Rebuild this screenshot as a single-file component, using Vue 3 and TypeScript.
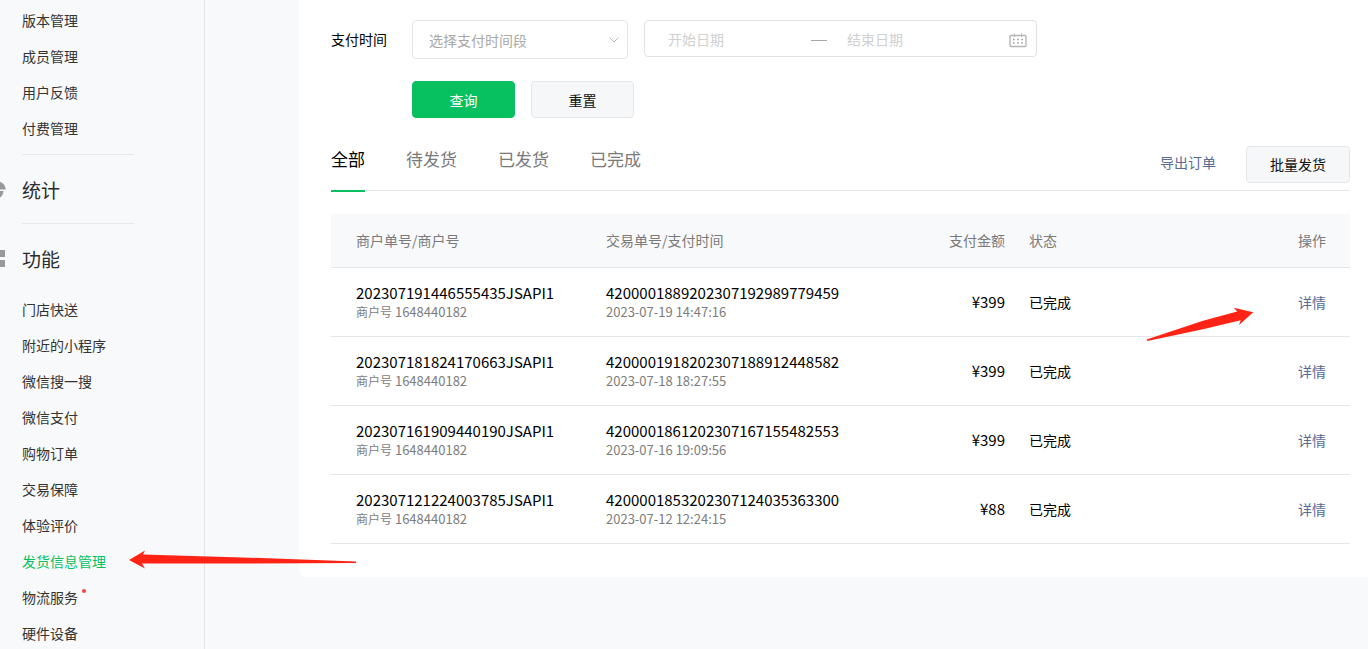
<script setup lang="ts">
import { ref } from 'vue'

interface NavItem {
  label: string
  active?: boolean
  dot?: boolean
}

interface Order {
  merchantNo: string
  tradeNo: string
  time: string
  amount: string
}

const manageItems: NavItem[] = [
  { label: '版本管理' },
  { label: '成员管理' },
  { label: '用户反馈' },
  { label: '付费管理' },
]

const featureItems: NavItem[] = [
  { label: '门店快送' },
  { label: '附近的小程序' },
  { label: '微信搜一搜' },
  { label: '微信支付' },
  { label: '购物订单' },
  { label: '交易保障' },
  { label: '体验评价' },
  { label: '发货信息管理', active: true },
  { label: '物流服务', dot: true },
  { label: '硬件设备' },
]

const tabs = ['全部', '待发货', '已发货', '已完成']
const activeTab = ref('全部')
const period = ref('')
const startDate = ref('')
const endDate = ref('')

const merchantId = '1648440182'
const orders: Order[] = [
  { merchantNo: '202307191446555435JSAPI1', tradeNo: '4200001889202307192989779459', time: '2023-07-19 14:47:16', amount: '¥399' },
  { merchantNo: '202307181824170663JSAPI1', tradeNo: '4200001918202307188912448582', time: '2023-07-18 18:27:55', amount: '¥399' },
  { merchantNo: '202307161909440190JSAPI1', tradeNo: '4200001861202307167155482553', time: '2023-07-16 19:09:56', amount: '¥399' },
  { merchantNo: '202307121224003785JSAPI1', tradeNo: '4200001853202307124035363300', time: '2023-07-12 12:24:15', amount: '¥88' },
]

function reset() {
  period.value = ''
  startDate.value = ''
  endDate.value = ''
}
</script>

<template>
  <div class="page">
    <nav class="sidebar">
      <ul class="nav-list">
        <li v-for="item in manageItems" :key="item.label">
          <a href="#" class="nav-link">{{ item.label }}</a>
        </li>
      </ul>
      <h2 class="nav-heading">
        <svg class="nav-icon" viewBox="0 0 6 18" aria-hidden="true">
          <path d="M0 0.8C3.4 1.9 5.6 4.9 5.8 8.6H0Z" fill="#999" />
          <path d="M0 10H3.6C3.2 13 2 15.2 0 16.6Z" fill="#999" />
        </svg>
        统计
      </h2>
      <h2 class="nav-heading">
        <svg class="nav-icon" viewBox="0 0 6 18" aria-hidden="true">
          <path d="M0 0H5V7H0ZM0 10H5V17H0Z" fill="#999" />
        </svg>
        功能
      </h2>
      <ul class="nav-list">
        <li v-for="item in featureItems" :key="item.label">
          <a href="#" class="nav-link" :class="{ active: item.active }">{{ item.label }}<i v-if="item.dot" class="dot"></i></a>
        </li>
      </ul>
    </nav>

    <main class="card">
      <form class="filters" @submit.prevent>
        <label class="filter-label" for="period">支付时间</label>
        <div class="fields">
          <div class="select-wrap">
            <select id="period" v-model="period" class="select">
              <option value="">选择支付时间段</option>
            </select>
            <svg class="chevron" viewBox="0 0 12 8" aria-hidden="true">
              <path d="M1.5 1.5L6 6L10.5 1.5" fill="none" stroke="#b8b8b8" />
            </svg>
          </div>
          <div class="range">
            <input v-model="startDate" class="date start" type="text" placeholder="开始日期" aria-label="开始日期" />
            <span class="dash"></span>
            <input v-model="endDate" class="date" type="text" placeholder="结束日期" aria-label="结束日期" />
            <svg class="calendar" viewBox="0 0 18 15" aria-hidden="true">
              <rect x="1" y="2.5" width="16" height="11" rx="1" fill="none" stroke="#b5b5b5" stroke-width="1.4" />
              <path d="M5.5 0.5V4M12.5 0.5V4" stroke="#b5b5b5" />
              <path d="M4 6.5H5.5M8.2 6.5H9.7M12.4 6.5H13.9M4 10H5.5M8.2 10H9.7M12.4 10H13.9" stroke="#999" stroke-width="1.4" />
            </svg>
          </div>
        </div>
        <div class="actions">
          <button type="submit" class="btn primary">查询</button>
          <button type="button" class="btn" @click="reset">重置</button>
        </div>
      </form>

      <div class="toolbar">
        <div class="tabs" role="tablist">
          <button
            v-for="tab in tabs"
            :key="tab"
            type="button"
            role="tab"
            class="tab"
            :class="{ active: tab === activeTab }"
            :aria-selected="tab === activeTab"
            @click="activeTab = tab"
          >{{ tab }}</button>
        </div>
        <div class="tools">
          <a href="#" class="link export">导出订单</a>
          <button type="button" class="btn">批量发货</button>
        </div>
      </div>

      <table class="orders">
        <colgroup>
          <col class="col-merchant" />
          <col class="col-trade" />
          <col class="col-amount" />
          <col />
          <col class="col-op" />
        </colgroup>
        <thead>
          <tr>
            <th>商户单号/商户号</th>
            <th>交易单号/支付时间</th>
            <th class="amount">支付金额</th>
            <th class="status">状态</th>
            <th class="op">操作</th>
          </tr>
        </thead>
        <tbody>
          <tr v-for="order in orders" :key="order.tradeNo">
            <td>
              <div class="number">{{ order.merchantNo }}</div>
              <div class="sub"><span class="sub-label">商户号</span> {{ merchantId }}</div>
            </td>
            <td>
              <div class="number">{{ order.tradeNo }}</div>
              <div class="sub">{{ order.time }}</div>
            </td>
            <td class="amount number">{{ order.amount }}</td>
            <td class="status">已完成</td>
            <td class="op"><a href="#" class="link">详情</a></td>
          </tr>
        </tbody>
      </table>
    </main>

    <svg class="arrow arrow-nav" viewBox="0 0 228 20" aria-hidden="true">
      <path d="M0 10L16 0.5L14 4.6L113 7.4L227 11.6V13L120 13.6H13L16 18.5Z" fill="#ff2316" />
    </svg>
    <svg class="arrow arrow-detail" viewBox="0 0 108 36" aria-hidden="true">
      <path d="M107.3 6.3L87.7 1.7L91.3 5.4L57 14.8L0.7 33.6L1.3 35L57 23.2L94.7 14.2L93 19Z" fill="#ff2316" />
    </svg>
  </div>
</template>

<style>
body {
  margin: 0;
  background: #f8f9fb;
}
</style>

<style scoped>
.page {
  position: relative;
  display: flex;
  align-items: flex-start;
  height: 100vh;
  overflow: hidden;
  box-sizing: border-box;
  background: #f8f9fb;
  color: #000;
  font-family: "Noto Sans CJK SC", "Noto Sans", sans-serif;
  font-size: 14px;
  line-height: 20px;
}

.page * {
  box-sizing: border-box;
}

button,
input,
select {
  font: inherit;
}

a {
  text-decoration: none;
}

.sidebar {
  flex: 0 0 205px;
  min-height: 100vh;
  padding-top: 2px;
  border-right: 1px solid #e4e6e8;
}

.nav-list {
  margin: 0;
  padding: 0 0 0 22px;
  list-style: none;
}

.nav-link {
  display: inline-block;
  position: relative;
  color: #333;
  line-height: 36px;
  vertical-align: top;
}

.nav-link.active {
  color: #07c160;
}

.nav-list li {
  height: 36px;
}

.dot {
  position: absolute;
  top: 10px;
  right: -8px;
  width: 4px;
  height: 4px;
  border-radius: 50%;
  background: #fa4343;
}

.nav-heading {
  display: flex;
  align-items: center;
  gap: 16px;
  position: relative;
  height: 69px;
  margin: 0;
  padding-top: 2px;
  color: #2b2b2b;
  font-size: 19px;
  font-weight: 400;
}

.nav-heading::before {
  content: "";
  position: absolute;
  top: 0;
  left: 22px;
  width: 112px;
  height: 1px;
  background: #e6e8ea;
}

.nav-list + .nav-heading {
  margin-top: 8px;
}

.nav-heading + .nav-list {
  margin-top: -1px;
}

.nav-icon {
  width: 6px;
  height: 18px;
}

.card {
  flex: 1;
  min-width: 0;
  margin-left: 94px;
  padding: 20px 18px 33px 32px;
  border-radius: 0 0 0 8px;
  background: #fff;
}

.filters {
  display: grid;
  grid-template-columns: 81px 1fr;
  row-gap: 22px;
}

.filter-label {
  line-height: 38px;
}

.fields,
.actions {
  display: flex;
  align-items: flex-start;
  gap: 16px;
}

.actions {
  grid-column: 2;
}

.select-wrap {
  position: relative;
  width: 216px;
}

.select {
  display: block;
  width: 100%;
  height: 39px;
  padding: 0 32px 0 16px;
  border: 1px solid #e4e6e8;
  border-radius: 4px;
  appearance: none;
  background: #fff;
  color: #a8a8a8;
}

.chevron {
  position: absolute;
  top: 16px;
  right: 8px;
  width: 12px;
  height: 8px;
  pointer-events: none;
}

.range {
  display: flex;
  align-items: center;
  width: 393px;
  height: 37px;
  padding: 0 9px 0 23px;
  border: 1px solid #e0e2e4;
  border-radius: 4px;
}

.date {
  flex: 1;
  min-width: 0;
  padding: 0;
  border: 0;
  outline: 0;
  background: none;
}

.date.start {
  flex: 0 0 143px;
}

.date::placeholder {
  color: #d0d0d0;
  opacity: 1;
}

.dash {
  width: 16px;
  height: 1px;
  margin: 3px 20px 0 0;
  background: #a8a8a8;
}

.calendar {
  width: 18px;
  height: 15px;
  margin-top: 4px;
}

.btn {
  min-width: 103px;
  height: 37px;
  padding: 0 23px;
  border: 1px solid #e4e6e8;
  border-radius: 4px;
  background: #f6f7f9;
  color: #111;
}

.btn.primary {
  border-color: #07c160;
  background: #07c160;
  color: #fff;
}

.toolbar {
  display: flex;
  justify-content: space-between;
  height: 73px;
  border-bottom: 1px solid #e4e6e8;
}

.tabs {
  display: flex;
  gap: 41px;
}

.tab {
  height: 74px;
  padding: 10px 0 0;
  border: 0;
  border-bottom: 2px solid transparent;
  background: none;
  color: #7a7a7a;
  font-size: 17px;
}

.tab.active {
  border-color: #07c160;
  color: #000;
}

.tools {
  display: flex;
  align-items: center;
  gap: 30px;
  padding-top: 20px;
}

.link {
  color: #576b95;
}

.export {
  padding-bottom: 4px;
}

.orders {
  width: 100%;
  margin-top: 23px;
  border-collapse: separate;
  border-spacing: 0;
  table-layout: fixed;
}

.col-merchant {
  width: 250px;
}

.col-trade {
  width: 300px;
}

.col-amount {
  width: 124px;
}

.col-op {
  width: 100px;
}

th,
td {
  padding: 0 0 0 25px;
  border-bottom: 1px solid #e4e6e8;
  text-align: left;
}

th {
  height: 54px;
  padding-bottom: 2px;
  background: #f8f9fb;
  color: #7a7a7a;
  font-weight: 400;
}

td {
  height: 69px;
}

.number {
  font-size: 15px;
}

.sub {
  color: #7d7d7d;
  font-size: 13px;
  line-height: 18px;
}

.sub-label {
  font-size: 12px;
}

.amount {
  text-align: right;
}

.status {
  padding-left: 24px;
}

.op {
  padding-right: 24px;
  text-align: right;
}

.arrow {
  position: absolute;
  pointer-events: none;
}

.arrow-nav {
  top: 550px;
  left: 129px;
  width: 228px;
  height: 20px;
}

.arrow-detail {
  top: 306px;
  right: 114px;
  width: 108px;
  height: 36px;
}
</style>
